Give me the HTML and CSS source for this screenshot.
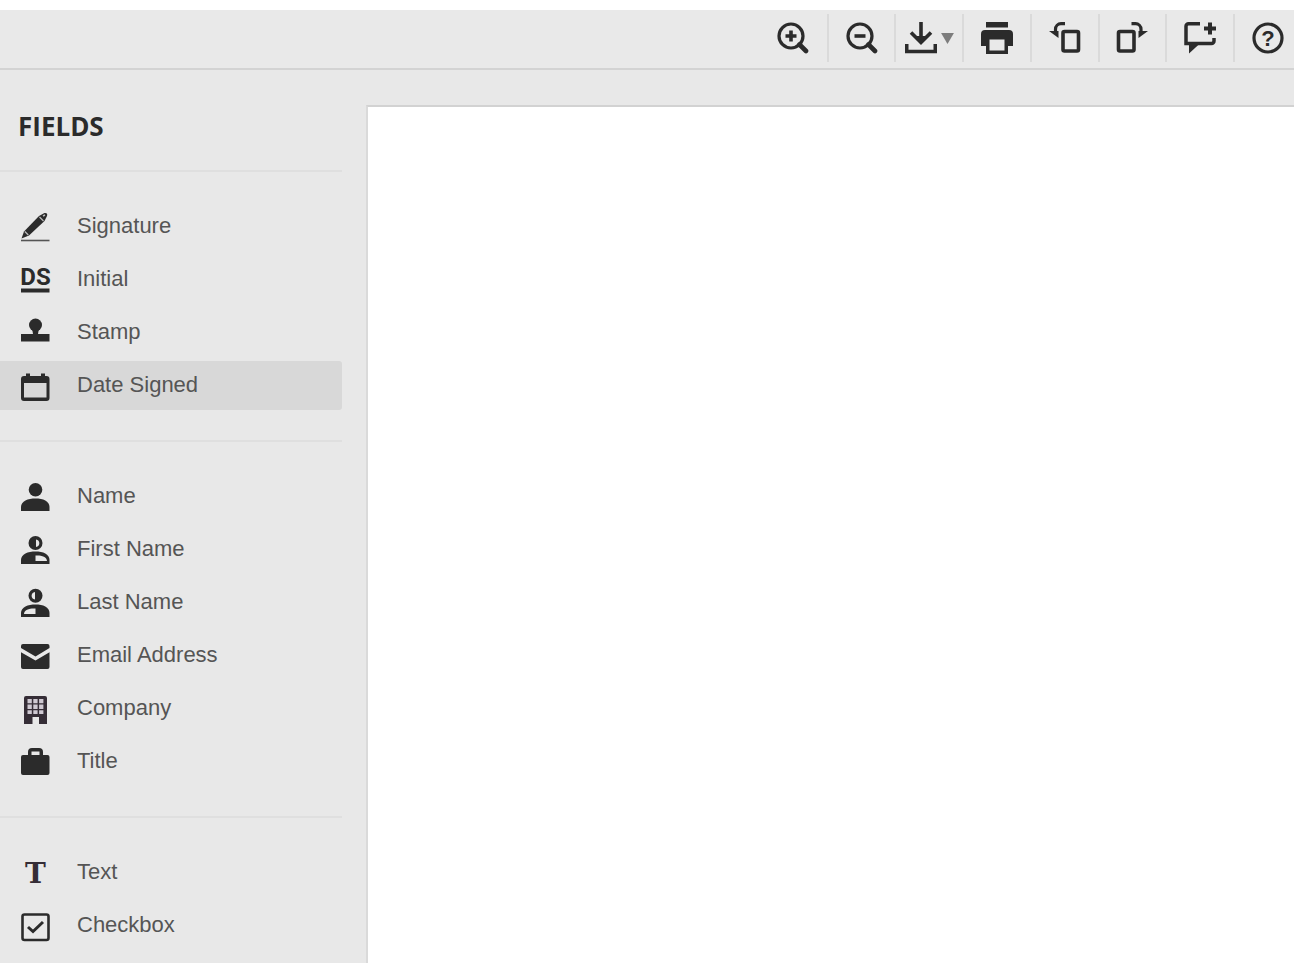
FILE: index.html
```html
<!DOCTYPE html>
<html lang="en">
<head>
<meta charset="utf-8">
<title>Document fields</title>
<link rel="stylesheet" href="styles.css">
</head>
<body>
<div class="app">
  <header class="toolbar">
    <div class="tools">
      <button class="tool" type="button" aria-label="Zoom in"><svg class="tool-icon" viewBox="0 0 32 32"><circle cx="14" cy="14" r="12" fill="none" stroke="currentColor" stroke-width="3.2"/><path d="M14 8.500v11M8.500 14h11" fill="none" stroke="currentColor" stroke-width="3.600"/><path d="M22.500 22.500l6.500 6.500" stroke="currentColor" stroke-width="4.600" stroke-linecap="round"/></svg></button>
      <button class="tool" type="button" aria-label="Zoom out"><svg class="tool-icon" viewBox="0 0 32 32"><circle cx="14" cy="14" r="12" fill="none" stroke="currentColor" stroke-width="3.2"/><path d="M8.500 14h11" fill="none" stroke="currentColor" stroke-width="3.600"/><path d="M22.500 22.500l6.500 6.500" stroke="currentColor" stroke-width="4.600" stroke-linecap="round"/></svg></button>
      <button class="tool" type="button" aria-label="Download"><svg class="tool-icon" viewBox="0 0 32 32"><path d="M16 0v20M6 10.500l10 10 10-10M1.700 22v7.500h28.600V22" fill="none" stroke="currentColor" stroke-width="3.600"/><path d="M10 14h12l-6 8z" fill="currentColor"/></svg><svg class="caret" viewBox="0 0 14 12"><path d="M0 0h14L7 12z" fill="#7d7d7d"/></svg></button>
      <button class="tool" type="button" aria-label="Print"><svg class="tool-icon" viewBox="0 0 32 32"><path d="M5 0h22v5.500H5zM4 8h24a4 4 0 0 1 4 4v12h-5v8H5v-8H0V12a4 4 0 0 1 4-4zM8.500 17.500V28.500h15V17.500z" fill="currentColor" fill-rule="evenodd"/></svg></button>
      <button class="tool" type="button" aria-label="Rotate left"><svg class="tool-icon" viewBox="0 0 32 32"><rect x="14" y="9.500" width="15.500" height="19.500" rx="1.500" fill="none" stroke="currentColor" stroke-width="3.600"/><path d="M16 1.700h-4a5.500 5.500 0 0 0-5.500 5.500V11" fill="none" stroke="currentColor" stroke-width="3.200"/><path d="M0 9h9.500v7z" fill="currentColor"/></svg></button>
      <button class="tool" type="button" aria-label="Rotate right"><svg class="tool-icon" viewBox="0 0 32 32"><rect x="2.500" y="9.500" width="15.500" height="19.500" rx="1.500" fill="none" stroke="currentColor" stroke-width="3.600"/><path d="M15.500 1.700h4A5.500 5.500 0 0 1 25 7.200V11" fill="none" stroke="currentColor" stroke-width="3.200"/><path d="M22.500 9H32l-9.500 7z" fill="currentColor"/></svg></button>
      <button class="tool" type="button" aria-label="Add comment"><svg class="tool-icon" viewBox="0 0 32 32"><path d="M16 1.800H4.500a2.500 2.500 0 0 0-2.500 2.500V21.500h25.500a2.500 2.500 0 0 0 2.500-2.500V16" fill="none" stroke="currentColor" stroke-width="3.500"/><path d="M5 21h11.500L5 31.500z" fill="currentColor"/><path d="M26 .5v12M20 6.500h12" stroke="currentColor" stroke-width="4"/></svg></button>
      <button class="tool" type="button" aria-label="Help"><svg class="tool-icon" viewBox="0 0 32 32"><circle cx="16" cy="16" r="14" fill="none" stroke="currentColor" stroke-width="3.200"/><text class="help-mark" x="16" y="24" text-anchor="middle">?</text></svg></button>
    </div>
  </header>
  <div class="workspace">
    <aside class="sidebar">
      <h1 class="heading">FIELDS</h1>
      <div class="group">
        <button class="field" type="button"><svg class="field-icon" viewBox="0 0 29 29"><path d="M0 28.500h28.500" stroke="#555" stroke-width="1.600"/><path d="M.5 26.500L3 19.500 18 4l4.500-2.500c2.500-1.200 4.500 0 3.500 2.500L23.500 9 8 23.500z" fill="currentColor"/><path d="M3.800 19.500l3.500 3.500M18.500 5l4 4" stroke="#bbb" stroke-width="1.200"/><path d="M22 4l2-1" stroke="#bbb" stroke-width="1.500"/></svg>Signature</button>
        <button class="field" type="button"><svg class="field-icon" viewBox="0 0 29 29"><text class="ds-mark" x="14.500" y="20" text-anchor="middle">DS</text><path d="M0 25.500h28.500" stroke="currentColor" stroke-width="4"/></svg>Initial</button>
        <button class="field" type="button"><svg class="field-icon" viewBox="0 0 29 29"><circle cx="14.500" cy="7" r="6.500" fill="currentColor"/><path d="M11 10h7l-1 6h11.500v7.500H0V16h12z" fill="currentColor"/></svg>Stamp</button>
        <button class="field field-active" type="button"><svg class="field-icon" viewBox="0 0 29 29"><path d="M3 5h2V2.500h4V5h11V2.500h4V5h1.500a3 3 0 0 1 3 3v19a3 3 0 0 1-3 3H3a3 3 0 0 1-3-3V8a3 3 0 0 1 3-3zM3 12v14.500h22.500V12z" fill="currentColor" fill-rule="evenodd"/></svg>Date Signed</button>
      </div>
      <div class="group">
        <button class="field" type="button"><svg class="field-icon" viewBox="0 0 29 29"><circle cx="14.500" cy="7.700" r="6.800" fill="currentColor"/><path d="M0 29v-4c0-6 7-8.500 14.500-8.500S28.500 19 28.500 25v4z" fill="currentColor"/></svg>Name</button>
        <button class="field" type="button"><svg class="field-icon" viewBox="0 0 29 29"><circle cx="14.500" cy="8" r="7" fill="currentColor"/><path d="M0 29v-4c0-6 7-8.500 14.500-8.500S28.500 19 28.500 25v4z" fill="currentColor"/><path d="M15 4.500c4.500.5 4.500 7 0 7.500zM14.500 20.500c5-.5 11.500 1 11.500 5.500H14.500z" fill="#e8e8e8"/></svg>First Name</button>
        <button class="field" type="button"><svg class="field-icon" viewBox="0 0 29 29"><circle cx="14.500" cy="7.700" r="7" fill="currentColor"/><path d="M0 29v-4c0-6 7-8.500 14.500-8.500S28.500 19 28.500 25v4z" fill="currentColor"/><path d="M14 4c-4.500.5-4.500 7 0 7.500zM14.500 20.500c-5-.5-11.500 1-11.500 5.500h11.500z" fill="#e8e8e8"/></svg>Last Name</button>
        <button class="field" type="button"><svg class="field-icon" viewBox="0 0 29 29"><path d="M2 3h24.500a2 2 0 0 1 2 2v2L14.500 15.500 0 7V5a2 2 0 0 1 2-2zM0 11.200l14.500 8.300 14-8.300V26a2 2 0 0 1-2 2H2a2 2 0 0 1-2-2z" fill="currentColor"/></svg>Email Address</button>
        <button class="field" type="button"><svg class="field-icon" viewBox="0 0 29 29"><path d="M3 4a2 2 0 0 1 2-2h19a2 2 0 0 1 2 2v26h-8v-7h-6.500v7H3z" fill="#352d36"/><path d="M6.500 5h4.300v4.300H6.500zM12.300 5h4.300v4.300h-4.300zM18.100 5h4.300v4.300h-4.300zM6.500 10.600h4.300v4.300H6.500zM12.300 10.600h4.300v4.300h-4.300zM18.100 10.600h4.300v4.300h-4.300zM6.500 16.200h4.300v3.800H6.500zM12.300 16.200h4.300v3.800h-4.300zM18.100 16.200h4.300v3.800h-4.300z" fill="#cfc9d2"/></svg>Company</button>
        <button class="field" type="button"><svg class="field-icon" viewBox="0 0 29 29"><path d="M2 8h5V5a4 4 0 0 1 4-4h7a4 4 0 0 1 4 4v3h4.500a2 2 0 0 1 2 2v16a2 2 0 0 1-2 2H2a2 2 0 0 1-2-2V10a2 2 0 0 1 2-2zM10.500 8h8V4.500h-8z" fill="currentColor" fill-rule="evenodd"/></svg>Title</button>
      </div>
      <div class="group">
        <button class="field" type="button"><svg class="field-icon" viewBox="0 0 29 29"><text class="t-mark" x="14.500" y="25" text-anchor="middle">T</text></svg>Text</button>
        <button class="field" type="button"><svg class="field-icon" viewBox="0 0 29 29"><rect x="1.500" y="3.500" width="26" height="25.500" rx="2" fill="none" stroke="currentColor" stroke-width="2.600"/><path d="M7 16l5 4.500L22 11" fill="none" stroke="currentColor" stroke-width="3"/></svg>Checkbox</button>
      </div>
    </aside>
    <main class="page" aria-label="Document page"></main>
  </div>
</div>
</body>
</html>
```
FILE: styles.css
```css
* {
  box-sizing: border-box;
}

body {
  margin: 0;
  background: #fff;
  color: #2b2b2b;
  font-family: "Liberation Sans", Arial, sans-serif;
}

button {
  margin: 0;
  border: 0;
  background: none;
  color: inherit;
  font: inherit;
  cursor: pointer;
}

.app {
  display: flex;
  flex-direction: column;
  height: 100vh;
  padding: 10px 0 7px;
}

.toolbar {
  display: flex;
  flex: none;
  justify-content: flex-end;
  padding: 4px 0 6px;
  border-bottom: 2px solid #d3d3d3;
  background: #e9e9e9;
}

.tools {
  display: grid;
  grid-template-columns: repeat(7, 1fr) 61px;
  width: 535px;
}

.tool {
  display: flex;
  align-items: center;
  justify-content: center;
  gap: 4px;
  height: 48px;
  padding: 0;
  border-left: 2px solid #dadada;
}

.tool:first-child {
  border-left: 0;
}

.tool:last-child {
  padding: 0 10px 0 16px;
}

.tool-icon {
  flex: none;
  width: 32px;
  height: 32px;
}

.caret {
  flex: none;
  width: 13px;
  height: 11px;
}

.help-mark {
  fill: currentColor;
  font: bold 22px "Liberation Sans", Arial, sans-serif;
}

.workspace {
  display: flex;
  flex: 1;
  min-height: 0;
  padding-top: 35px;
  background: #e8e8e8;
}

.sidebar {
  flex: none;
  width: 342px;
  margin-right: 24px;
  overflow: hidden;
}

.heading {
  margin: 0;
  padding: 5px 18px 28px;
  font: bold 26px/32px "Open Sans", "Noto Sans", sans-serif;
}

.group {
  display: flex;
  flex-direction: column;
  gap: 4px;
  padding: 30px 0;
  border-top: 2px solid #dfdfdf;
}

.field {
  display: flex;
  align-items: center;
  gap: 27px;
  height: 49px;
  padding: 0 21px 2px;
  border-radius: 0 3px 3px 0;
  color: #555;
  font-size: 22px;
  line-height: 26px;
  text-align: left;
}

.field-active {
  background: #d8d8d8;
}

.field-icon {
  flex: none;
  width: 29px;
  height: 29px;
  margin-top: 2px;
  overflow: visible;
  color: #2b2b2b;
}

.ds-mark {
  fill: currentColor;
  font: bold 24px Roboto, "Liberation Sans", sans-serif;
}

.t-mark {
  fill: #352d36;
  font: bold 28px "DejaVu Serif", serif;
}

.page {
  flex: 1;
  border-top: 2px solid #d2d2d2;
  border-left: 2px solid #dadada;
  background: #fff;
}
```
